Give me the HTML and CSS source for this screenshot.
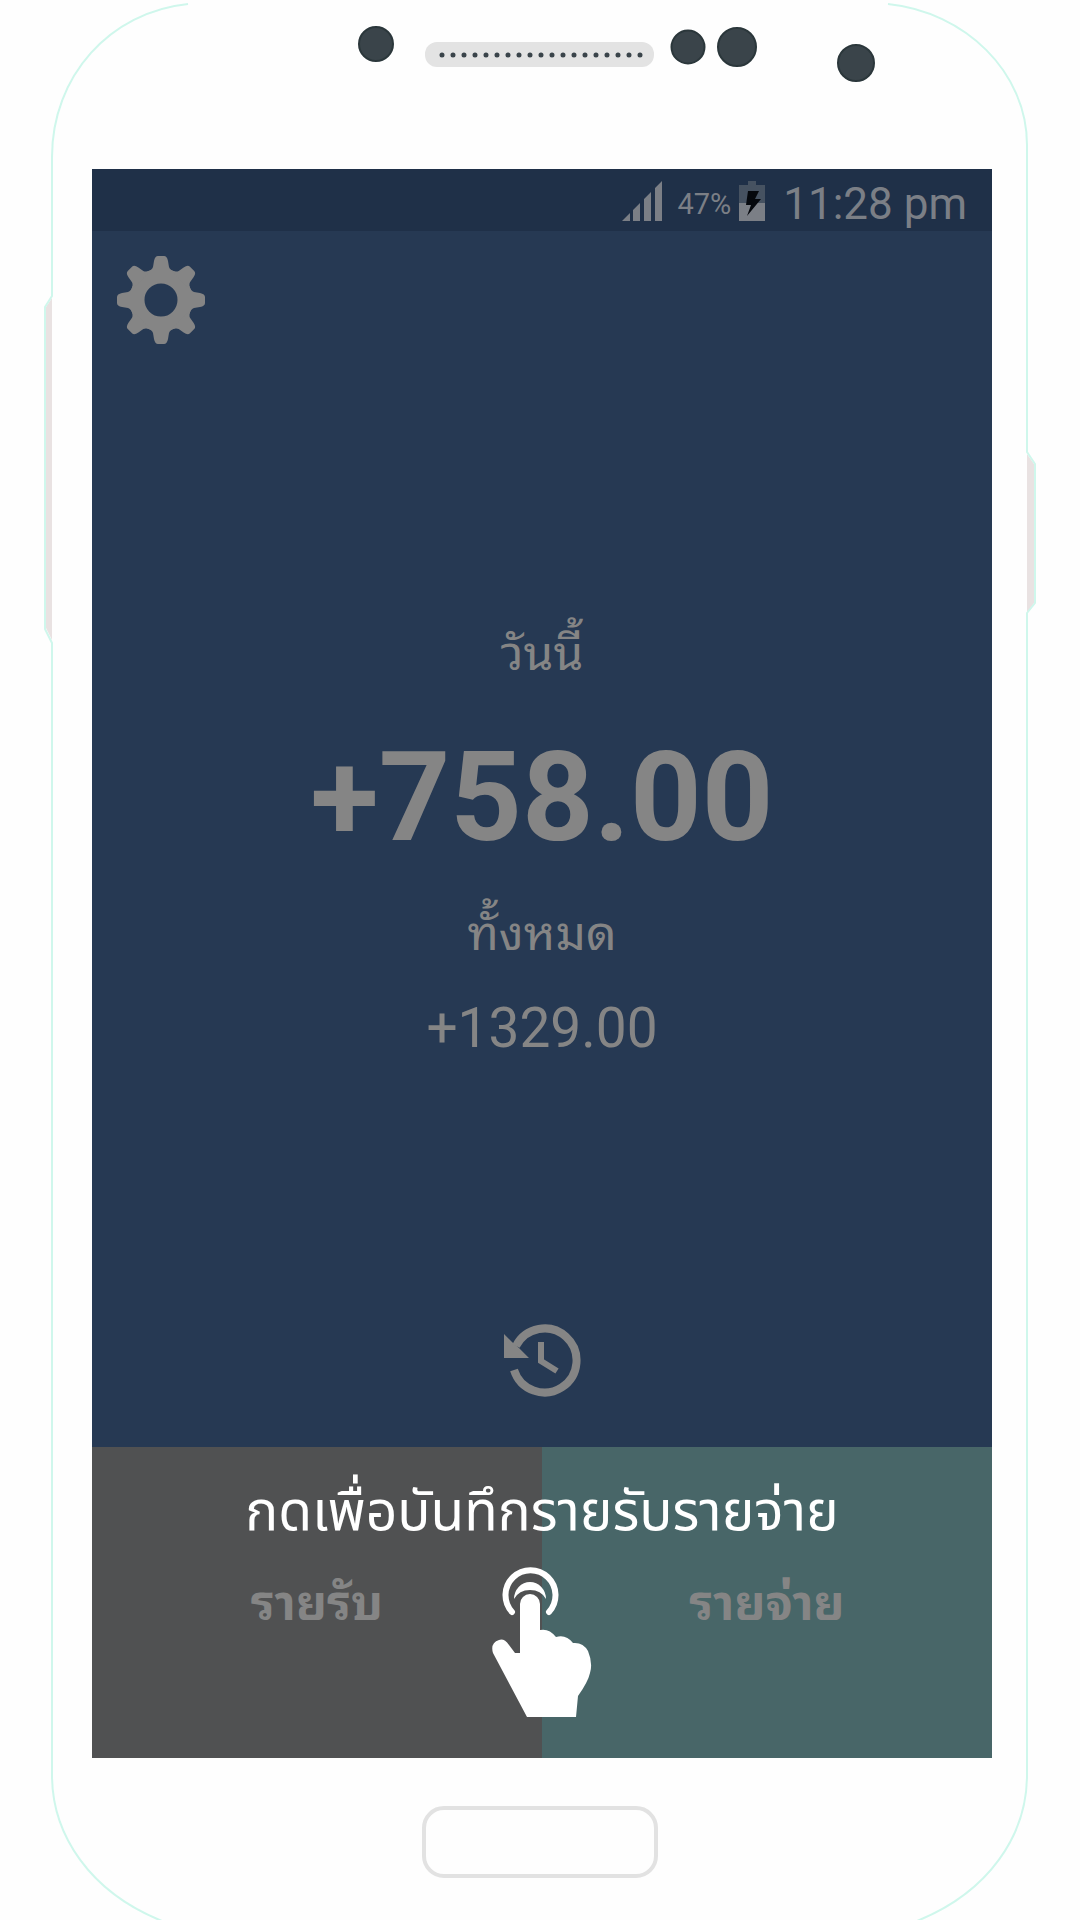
FILE: index.html
```html
<!DOCTYPE html>
<html lang="th">
<head>
<meta charset="utf-8">
<meta name="viewport" content="width=device-width, initial-scale=1">
<title>รายรับรายจ่าย</title>
<link rel="stylesheet" href="styles.css">
</head>
<body>
<div class="phone">
  <svg class="phone-outline" viewBox="0 0 1080 1920" preserveAspectRatio="none" aria-hidden="true">
    <path class="key" d="M52 298L46 307V628L52 640Z"/>
    <path class="key" d="M1027 454L1034 464V603L1027 613Z"/>
    <g class="edge">
      <path d="M188 4C110 12 52 76 52 157V296L45 307V629L52 643V1775C52 1835 90 1892 162 1921"/>
      <path d="M888 4C965 12 1027 72 1027 145V452L1035 464V603L1027 613V1775C1027 1835 989 1892 917 1921"/>
    </g>
  </svg>

  <header class="bezel-top">
    <svg class="sensors" viewBox="0 0 1080 169" aria-hidden="true">
      <rect x="425" y="42" width="229" height="25" rx="12" fill="#e3e3e3"/>
      <path d="M442 55H641" fill="none" stroke="#3a444a" stroke-width="5" stroke-linecap="round" stroke-dasharray="0 11"/>
      <g fill="#3a444a" stroke="#2b373b" stroke-width="2">
        <circle cx="376" cy="44" r="17"/>
        <circle cx="688" cy="47" r="16.500"/>
        <circle cx="737" cy="47" r="19"/>
        <circle cx="856" cy="63" r="18"/>
      </g>
    </svg>
  </header>

  <main class="screen">
    <div class="status-bar">
      <svg class="signal" viewBox="0 0 41 40" aria-hidden="true">
        <path d="M0 40L8 32V40ZM11 29L18 22V40H11ZM22 18L29 11V40H22ZM33 7L40 0V40H33Z"/>
      </svg>
      <span class="battery-level">47%</span>
      <svg class="battery" viewBox="0 0 26 40" aria-hidden="true">
        <path fill="#465261" d="M9 0H17V4H26V23H0V4H9Z"/>
        <path fill="#7b7f86" d="M0 22H26V40H0Z"/>
        <path fill="#05080d" d="M9 10H20L16 18H22L8 35L12 24H7Z"/>
      </svg>
      <time class="clock">11:28 pm</time>
    </div>

    <section class="summary">
      <button class="icon-button settings" type="button" aria-label="ตั้งค่า">
        <svg class="gear" viewBox="-44 -44 88 88" aria-hidden="true">
          <defs><path id="tooth" d="M-14 -28Q-9 -30 -8 -33L-7 -39Q-6 -44 -3 -44H3Q6 -44 7 -39L8 -33Q9 -30 14 -28Z"/></defs>
          <circle r="24" fill="none" stroke="#858585" stroke-width="15"/>
          <g fill="#858585">
            <use href="#tooth"/><use href="#tooth" transform="rotate(45)"/>
            <use href="#tooth" transform="rotate(90)"/><use href="#tooth" transform="rotate(135)"/>
            <use href="#tooth" transform="rotate(180)"/><use href="#tooth" transform="rotate(225)"/>
            <use href="#tooth" transform="rotate(270)"/><use href="#tooth" transform="rotate(315)"/>
          </g>
        </svg>
      </button>

      <div class="totals">
        <h2 class="label">วันนี้</h2>
        <p class="today">+758.00</p>
        <h2 class="label">ทั้งหมด</h2>
        <p class="overall">+1329.00</p>
      </div>

      <button class="icon-button history" type="button" aria-label="ประวัติ">
        <svg class="clock-icon" viewBox="0 0 78 74" aria-hidden="true">
          <path fill="#858585" d="M1 11L9 19L16 25L26 35H1Z"/>
          <g fill="none" stroke="#858585" stroke-width="8">
            <path d="M13 23A32 32 0 1 1 11 47"/>
            <path stroke-width="6" d="M38 19V38L54 48"/>
          </g>
        </svg>
      </button>
    </section>

    <div class="actions">
      <button class="action income" type="button">รายรับ</button>
      <button class="action expense" type="button">รายจ่าย</button>
      <div class="hint">
        <p class="hint-text">กดเพื่อบันทึกรายรับรายจ่าย</p>
        <svg class="hand" viewBox="0 0 100 150" aria-hidden="true">
          <path fill="none" stroke="#fff" stroke-width="6" stroke-linecap="round" d="M20 45A25 25 0 1 1 57 45"/>
          <path fill="#fff" d="M22 32A16 17 0 0 1 54 32Q49 23 38 23Q27 23 22 32Z"/>
          <path fill="#fff" d="M28 37A10 10 0 0 1 48 37V63Q57 61 64 70Q74 67 81 76Q91 75 96 84Q101 96 98 106Q96 115 86 129L84 150H35L1 86Q-2 76 7 73Q12 71 17 78L23 86H28Z"/>
        </svg>
      </div>
    </div>
  </main>

  <footer class="bezel-bottom">
    <button class="home" type="button" aria-label="หน้าหลัก"></button>
  </footer>
</div>
</body>
</html>
```
FILE: styles.css
```css
* { box-sizing: border-box; }

body {
  margin: 0;
  background: #fefefe;
  font-family: Roboto, "Noto Sans Thai", "Noto Sans", sans-serif;
}

button {
  padding: 0;
  border: 0;
  background: none;
  font: inherit;
}

h2, p { margin: 0; font-weight: 400; }
svg { display: block; }

.phone {
  position: relative;
  display: flex;
  flex-direction: column;
  min-height: 100vh;
}

.phone-outline {
  position: absolute;
  inset: 0;
  width: 100%;
  height: 100%;
  pointer-events: none;
}

.edge { fill: none; stroke: #cff7ec; stroke-width: 2; }
.key { fill: #e9e2e2; }

.sensors { width: 100%; }

.screen {
  position: relative;
  flex: 1;
  display: flex;
  flex-direction: column;
  margin: 0 88px 0 92px;
  background: #263953;
  color: #858585;
}

.status-bar {
  display: flex;
  align-items: center;
  justify-content: flex-end;
  height: 62px;
  padding: 2px 25px 0 0;
  background: #1f3048;
  color: #7b7f86;
}

.signal { width: 41px; height: 40px; fill: #7b7f86; }
.battery-level { margin: 6px 8px 0 14px; font-size: 29px; }
.battery { width: 26px; height: 40px; }
.clock { margin: 6px 0 0 18px; font-size: 44px; }

.summary {
  flex: 1;
  display: flex;
  flex-direction: column;
  align-items: center;
  justify-content: space-between;
  padding: 25px 25px 50px;
}

.settings { align-self: flex-start; }
.gear { width: 88px; height: 88px; }
.clock-icon { width: 78px; height: 74px; }

.totals { padding-top: 24px; text-align: center; }

.label,
.action { font-family: Roboto, "Noto Looped Thai", "Noto Sans Thai Looped", Loma, Waree, Garuda, "Noto Sans Thai", sans-serif; }

.label { font-size: 48px; line-height: 80px; }
.today { margin-top: 8px; font-size: 125px; line-height: 192px; font-weight: 700; }
.overall { margin-top: 4px; font-size: 55px; line-height: 100px; }

.actions {
  position: relative;
  display: grid;
  grid-template-columns: 1fr 1fr;
  height: 311px;
}

.action { padding-bottom: 8px; color: #858585; font-size: 48px; font-weight: 700; }
.income { background: #505152; }
.expense { background: #486668; }

.hint {
  position: absolute;
  inset: 0;
  display: flex;
  flex-direction: column;
  align-items: center;
  padding-top: 14px;
  color: #fff;
  pointer-events: none;
}

.hint-text {
  margin-bottom: 6px;
  font-size: 55px;
  line-height: 100px;
  white-space: nowrap;
}

.hand { width: 100px; height: 150px; margin-right: 0; }

.bezel-bottom {
  display: flex;
  justify-content: center;
  height: 162px;
  padding-top: 48px;
}

.home {
  width: 236px;
  height: 72px;
  border: 4px solid #e2e2e2;
  border-radius: 22px;
}
```
